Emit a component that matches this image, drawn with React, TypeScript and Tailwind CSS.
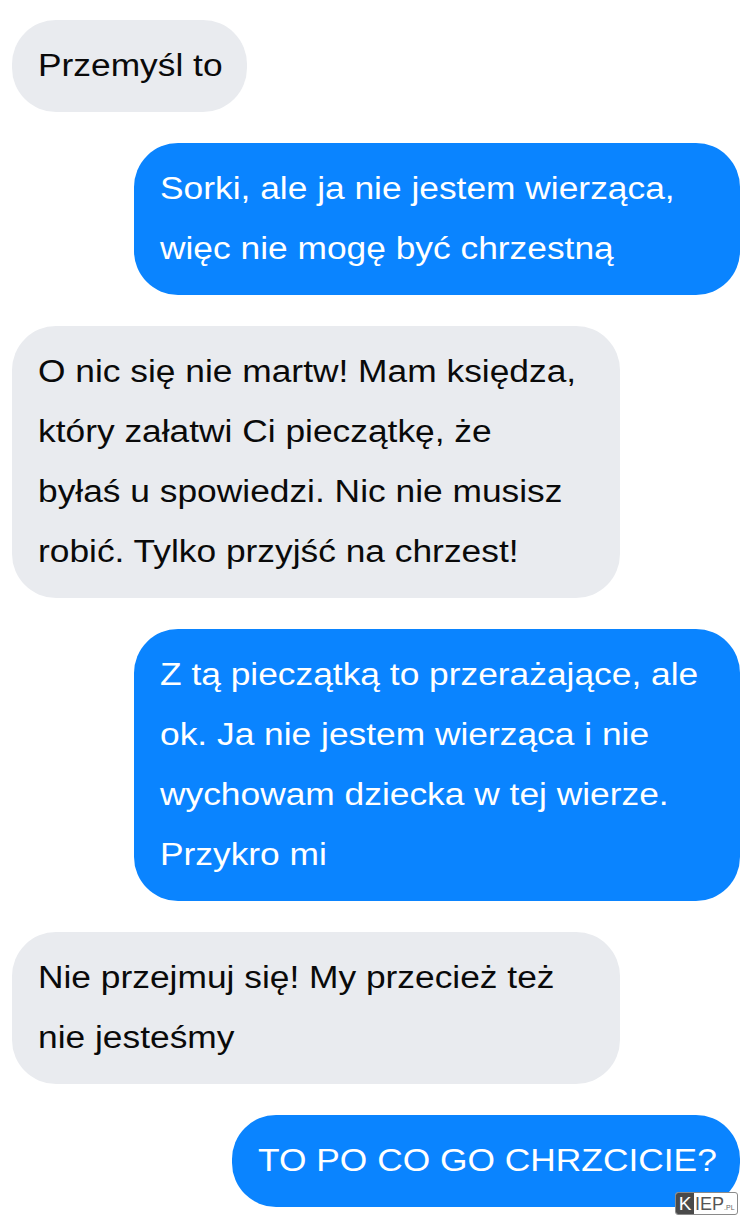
import React from 'react'

type Msg = { from: 'them' | 'me'; lines: string[]; w: string }

const messages: Msg[] = [
  { from: 'them', lines: ['Przemyśl to'], w: 'w-[235px]' },
  { from: 'me', lines: ['Sorki, ale ja nie jestem wierząca,', 'więc nie mogę być chrzestną'], w: 'w-[606px]' },
  {
    from: 'them',
    lines: [
      'O nic się nie martw! Mam księdza,',
      'który załatwi Ci pieczątkę, że',
      'byłaś u spowiedzi. Nic nie musisz',
      'robić. Tylko przyjść na chrzest!',
    ],
    w: 'w-[608px]',
  },
  {
    from: 'me',
    lines: [
      'Z tą pieczątką to przerażające, ale',
      'ok. Ja nie jestem wierząca i nie',
      'wychowam dziecka w tej wierze.',
      'Przykro mi',
    ],
    w: 'w-[606px]',
  },
  { from: 'them', lines: ['Nie przejmuj się! My przecież też', 'nie jesteśmy'], w: 'w-[608px]' },
  { from: 'me', lines: ['TO PO CO GO CHRZCICIE?'], w: 'w-[508px]' },
]

function Bubble({ from, lines, w }: Msg) {
  const mine = from === 'me'
  return (
    <div className={mine ? 'flex justify-end' : 'flex justify-start'}>
      <div
        className={[
          'rounded-[44px] px-[26px] py-4 text-[31px] leading-[60px] whitespace-nowrap',
          w,
          mine ? 'bg-[#0a84ff] text-white' : 'bg-[#e9ebef] text-[#0a0a0a]',
        ].join(' ')}
      >
        {lines.map((l, i) => (
          <div key={i} className="origin-left scale-x-[1.14]">
            {l}
          </div>
        ))}
      </div>
    </div>
  )
}

export default function App() {
  return (
    <div className="relative w-[750px] h-[1226px] bg-white overflow-hidden font-['Liberation_Sans',Arial,sans-serif]">
      <div className="flex flex-col gap-[31px] pt-5 pl-3 pr-[10px]">
        {messages.map((m, i) => (
          <Bubble key={i} {...m} />
        ))}
      </div>

      {/* watermark */}
      <div className="absolute left-[675px] top-[1192px] flex h-[23px] items-stretch overflow-hidden rounded-[3px] border border-[#8a8a8a] bg-white">
        <span className="flex w-[18px] items-center justify-center bg-[#4a4a4a] text-[19px] leading-none text-white">K</span>
        <span className="flex items-center pl-[1px] text-[18px] leading-none text-[#555]">IEP</span>
        <span className="flex items-end pb-[3px] pr-[2px] text-[7px] leading-none text-[#666]">.PL</span>
      </div>
    </div>
  )
}
